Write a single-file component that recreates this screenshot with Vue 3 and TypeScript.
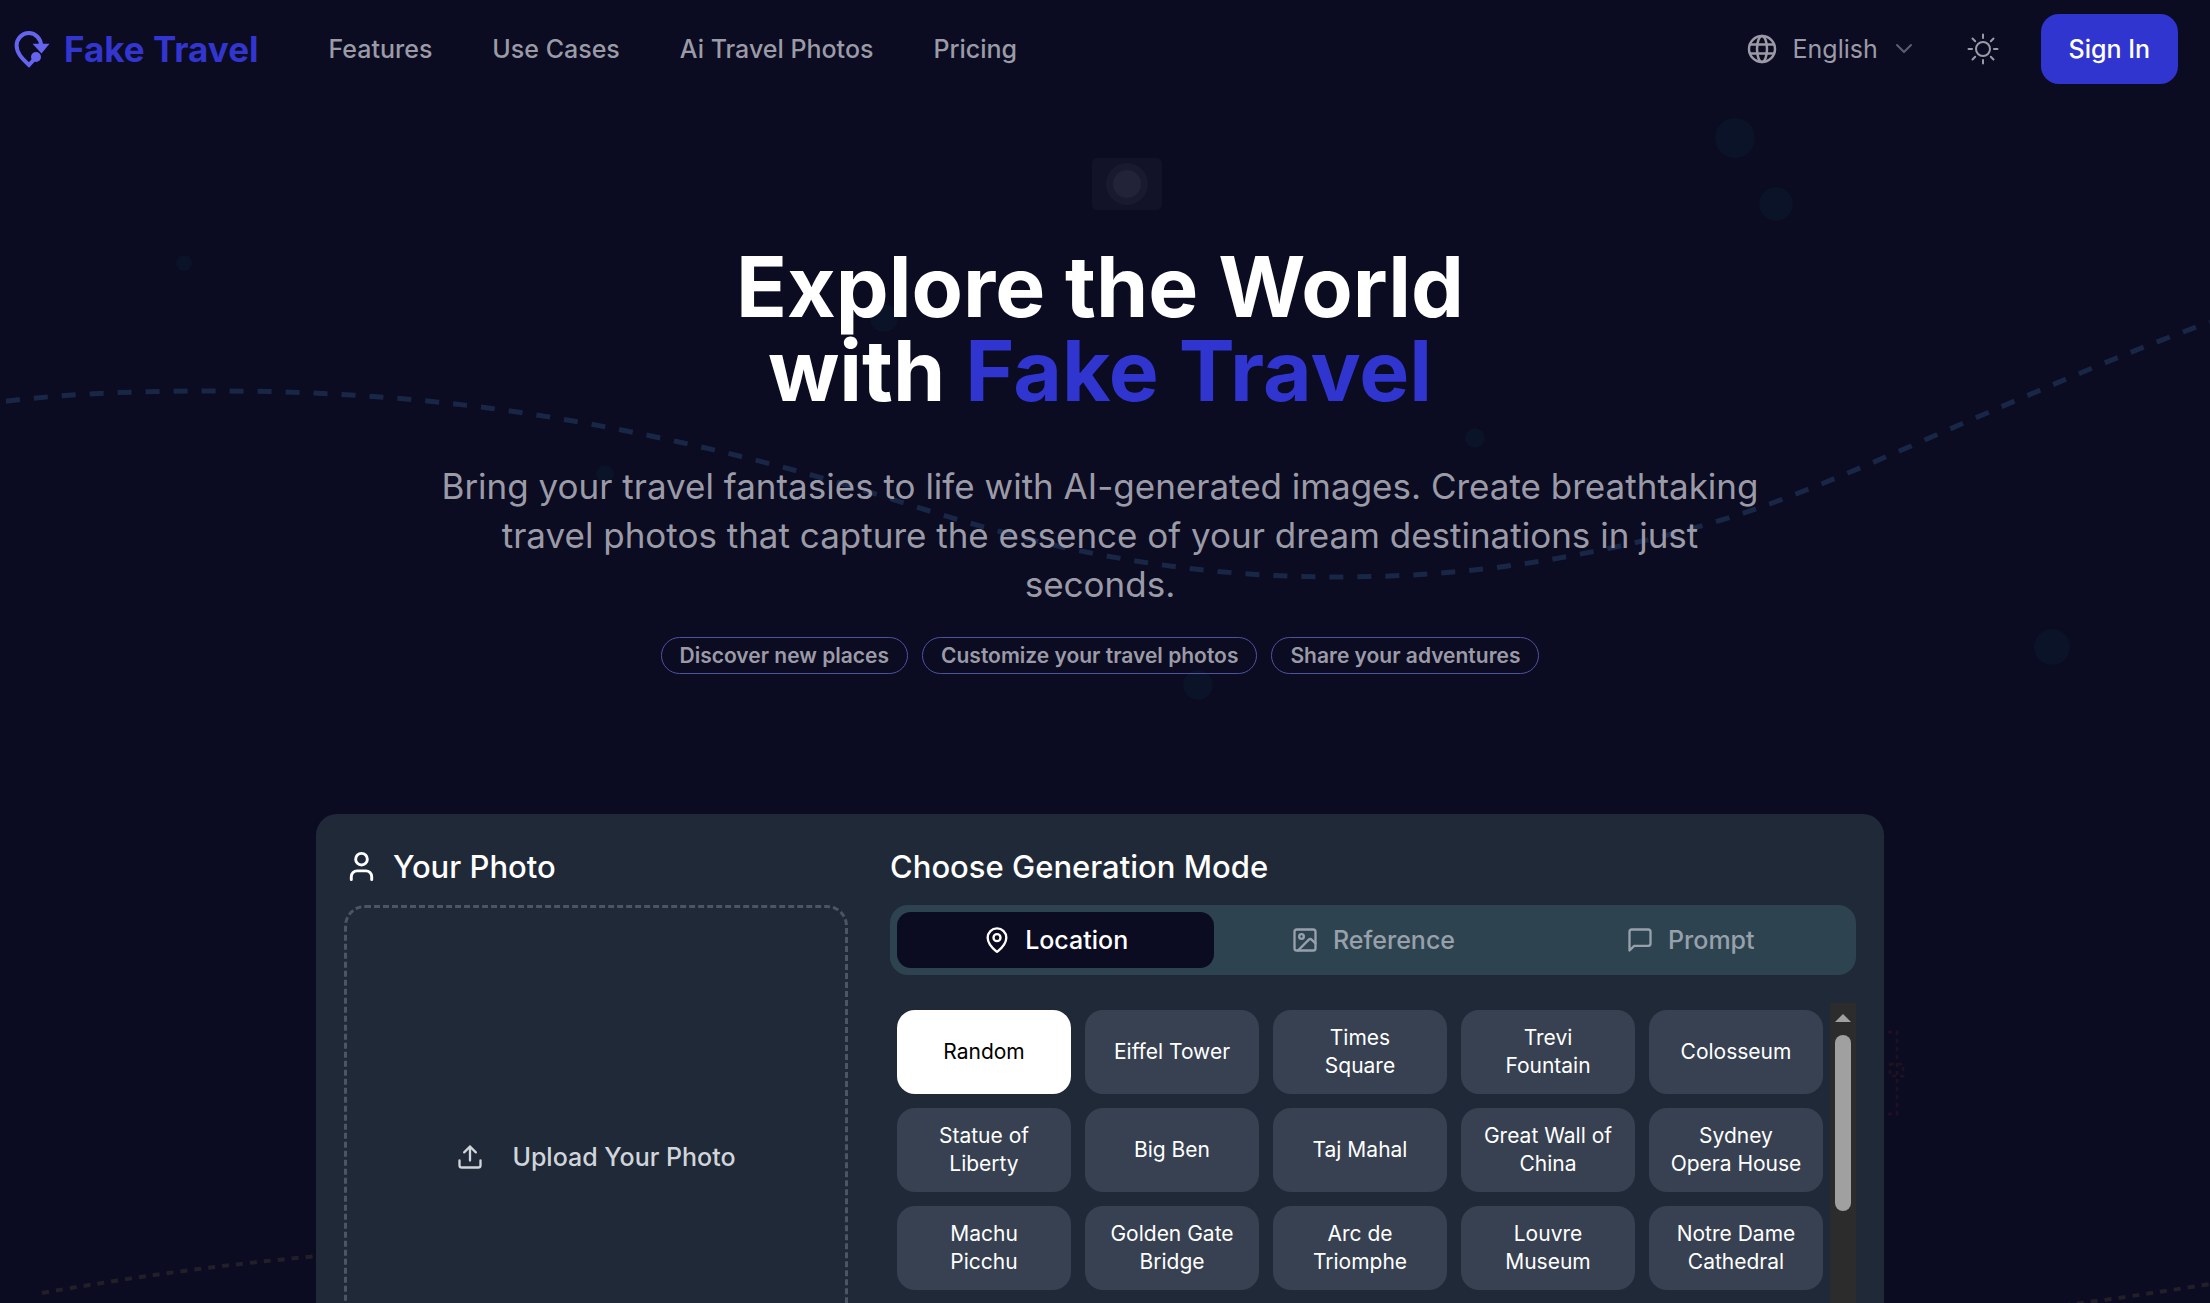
<script setup lang="ts">
import { ref } from 'vue'

interface Knot {
  x: number
  y: number
  slope: number
}

type Mode = 'location' | 'reference' | 'prompt'

const navLinks = ['Features', 'Use Cases', 'Ai Travel Photos', 'Pricing']
const highlights = ['Discover new places', 'Customize your travel photos', 'Share your adventures']
const modes: { id: Mode; label: string }[] = [
  { id: 'location', label: 'Location' },
  { id: 'reference', label: 'Reference' },
  { id: 'prompt', label: 'Prompt' },
]
const places = [
  'Random', 'Eiffel Tower', 'Times Square', 'Trevi Fountain', 'Colosseum',
  'Statue of Liberty', 'Big Ben', 'Taj Mahal', 'Great Wall of China', 'Sydney Opera House',
  'Machu Picchu', 'Golden Gate Bridge', 'Arc de Triomphe', 'Louvre Museum', 'Notre Dame Cathedral',
]

const language = ref('English')
const mode = ref<Mode>('location')
const place = ref('Random')

// Flight route behind the hero: knots joined by smooth cubic segments
const route: Knot[] = [
  { x: 0, y: 402, slope: -0.13 },
  { x: 220, y: 391, slope: 0 },
  { x: 488, y: 408, slope: 0.13 },
  { x: 679, y: 442, slope: 0.22 },
  { x: 885, y: 497, slope: 0.32 },
  { x: 1086, y: 552, slope: 0.2 },
  { x: 1336, y: 577, slope: 0 },
  { x: 1559, y: 558, slope: -0.18 },
  { x: 1775, y: 502, slope: -0.37 },
  { x: 1973, y: 419, slope: -0.43 },
  { x: 2210, y: 322, slope: -0.36 },
]

function smoothPath(knots: Knot[]): string {
  let d = `M${knots[0].x} ${knots[0].y}`
  for (let i = 1; i < knots.length; i++) {
    const a = knots[i - 1]
    const b = knots[i]
    const t = (b.x - a.x) / 3
    d += ` C${a.x + t} ${a.y + a.slope * t} ${b.x - t} ${b.y - b.slope * t} ${b.x} ${b.y}`
  }
  return d
}

const routePath = smoothPath(route)

const bubbles = [
  { x: 1735, y: 138, r: 20 },
  { x: 1776, y: 204, r: 17 },
  { x: 184, y: 263, r: 8 },
  { x: 884, y: 318, r: 14 },
  { x: 605, y: 474, r: 9 },
  { x: 1475, y: 438, r: 10 },
  { x: 1198, y: 685, r: 15 },
  { x: 2052, y: 647, r: 18 },
]
</script>

<template>
  <div class="page">
    <svg class="backdrop" viewBox="0 0 2210 1303" preserveAspectRatio="xMidYMin slice" aria-hidden="true">
      <circle v-for="b in bubbles" :key="b.x" :cx="b.x" :cy="b.y" :r="b.r" fill="#0a1327" />
      <path :d="routePath" fill="none" stroke="#192746" stroke-width="5" stroke-dasharray="14 14" stroke-dashoffset="-6" />
      <path d="M42 1293C400 1230 700 1230 1105 1290S1800 1350 2210 1284" fill="none" stroke="#231f28" stroke-width="4" stroke-dasharray="7 7" />
      <g fill="none" stroke="#1f1022" stroke-width="3" stroke-dasharray="4 4">
        <path d="M1880 1032H1897V1114H1880" />
        <rect x="1890" y="1064" width="13" height="12" />
      </g>
      <rect x="1092" y="158" width="70" height="52" rx="5" fill="#121228" />
      <circle cx="1127" cy="184" r="21" fill="#19192f" />
      <circle cx="1127" cy="184" r="14" fill="#222238" />
    </svg>

    <header class="topbar">
      <a class="brand" href="#">
        <svg width="36" height="38" viewBox="0 0 36 38" aria-hidden="true">
          <path d="M27 15.500A12.200 12.400 0 0 0 2.600 15.500C2.600 23 8 28.500 15 35L20.500 29" fill="none" stroke="#6464ee" stroke-width="4" />
          <path d="M18.500 13.800H35.500L27.500 23.500Z" fill="#6464ee" />
          <circle cx="22" cy="27" r="5" fill="#6464ee" />
        </svg>
        <span>Fake Travel</span>
      </a>
      <nav class="links">
        <a v-for="link in navLinks" :key="link" href="#">{{ link }}</a>
      </nav>
      <div class="tools">
        <div class="language">
          <svg width="30" height="30" viewBox="0 0 30 30" fill="none" stroke="currentColor" stroke-width="2.500" aria-hidden="true">
            <circle cx="15" cy="15" r="13" />
            <ellipse cx="15" cy="15" rx="5" ry="13" />
            <path d="M3 10.500H27M3 19.500H27" />
          </svg>
          <select v-model="language" aria-label="Language">
            <option>English</option>
          </select>
          <svg width="18" height="12" viewBox="0 0 18 12" fill="none" stroke="#5d5d6c" stroke-width="2" stroke-linecap="round" stroke-linejoin="round" aria-hidden="true">
            <path d="M2 2L9 9L16 2" />
          </svg>
        </div>
        <button class="theme" type="button" aria-label="Toggle theme">
          <svg width="32" height="32" viewBox="0 0 32 32" fill="none" stroke="currentColor" stroke-width="2" stroke-linecap="round" aria-hidden="true">
            <circle cx="16" cy="16" r="7" />
            <path d="M16 1.500V5M16 27V30.500M1.500 16H5M27 16H30.500M5.500 5.500L8.200 8.200M23.800 23.800L26.500 26.500M5.500 26.500L8.200 23.800M23.800 8.200L26.500 5.500" />
          </svg>
        </button>
        <button class="signin" type="button">Sign In</button>
      </div>
    </header>

    <main>
      <section class="hero">
        <h1>Explore the World<br />with <span>Fake Travel</span></h1>
        <p>
          Bring your travel fantasies to life with AI-generated images. Create breathtaking travel
          photos that capture the essence of your dream destinations in just seconds.
        </p>
        <ul class="badges">
          <li v-for="item in highlights" :key="item">{{ item }}</li>
        </ul>
      </section>

      <section class="card">
        <div class="photo">
          <h2>
            <svg width="35" height="35" viewBox="0 0 24 24" class="stroke" aria-hidden="true">
              <path d="M19 21v-2a4 4 0 0 0-4-4H9a4 4 0 0 0-4 4v2" />
              <circle cx="12" cy="7" r="4" />
            </svg>
            Your Photo
          </h2>
          <button class="upload" type="button">
            <svg width="28" height="28" viewBox="0 0 24 24" class="stroke" aria-hidden="true">
              <path d="M21 15v4a2 2 0 0 1-2 2H5a2 2 0 0 1-2-2v-4" />
              <path d="M17 8l-5-5-5 5M12 3v12" />
            </svg>
            Upload Your Photo
          </button>
        </div>

        <div class="generator">
          <h2>Choose Generation Mode</h2>
          <div class="tabs" role="tablist">
            <button
              v-for="m in modes"
              :key="m.id"
              type="button"
              role="tab"
              :aria-selected="mode === m.id"
              :class="{ active: mode === m.id }"
              @click="mode = m.id"
            >
              <svg width="28" height="28" viewBox="0 0 24 24" class="stroke" aria-hidden="true">
                <template v-if="m.id === 'location'">
                  <path d="M20 10c0 4.993-5.539 10.193-7.399 11.799a1 1 0 0 1-1.202 0C9.539 20.193 4 14.993 4 10a8 8 0 0 1 16 0" />
                  <circle cx="12" cy="10" r="3" />
                </template>
                <template v-else-if="m.id === 'reference'">
                  <rect x="3" y="3" width="18" height="18" rx="2" />
                  <circle cx="9" cy="9" r="2" />
                  <path d="M21 15l-3.086-3.086a2 2 0 0 0-2.828 0L6 21" />
                </template>
                <path v-else d="M21 15a2 2 0 0 1-2 2H7l-4 4V5a2 2 0 0 1 2-2h14a2 2 0 0 1 2 2z" />
              </svg>
              {{ m.label }}
            </button>
          </div>
          <div class="picker">
            <div class="places">
              <button
                v-for="p in places"
                :key="p"
                type="button"
                :class="{ chosen: place === p }"
                @click="place = p"
              >
                {{ p }}
              </button>
            </div>
            <div class="track" aria-hidden="true">
              <div class="arrow"></div>
              <div class="thumb"></div>
            </div>
          </div>
        </div>
      </section>
    </main>
  </div>
</template>

<style>
body {
  margin: 0;
  background: #0b0b22;
}
</style>

<style scoped>
.page {
  position: relative;
  height: 100vh;
  overflow: hidden;
  background: #0b0b22;
  color: #fff;
  font-family: Inter, "Liberation Sans", sans-serif;
}

.page * {
  box-sizing: border-box;
}

button,
select {
  border: 0;
  padding: 0;
  background: none;
  color: inherit;
  font: inherit;
}

a {
  color: inherit;
  text-decoration: none;
}

.stroke {
  flex: none;
  fill: none;
  stroke: currentColor;
  stroke-width: 2;
  stroke-linecap: round;
  stroke-linejoin: round;
}

.backdrop {
  position: absolute;
  inset: 0;
  width: 100%;
  height: 100%;
}

.topbar {
  position: relative;
  display: flex;
  align-items: center;
  height: 98px;
  padding: 0 32px 0 14px;
  color: #9b9ba7;
  font-size: 25px;
  font-weight: 500;
}

.brand {
  display: flex;
  align-items: center;
  gap: 14px;
  margin-right: 70px;
  color: #3335cf;
  font-size: 35px;
  font-weight: 700;
}

.links {
  display: flex;
  gap: 60px;
}

.tools {
  display: flex;
  align-items: center;
  gap: 42px;
  margin-left: auto;
}

.language {
  display: flex;
  align-items: center;
  gap: 16px;
  margin-right: 12px;
  font-weight: 400;
}

.language select {
  appearance: none;
}

.theme {
  display: flex;
}

.signin {
  height: 70px;
  padding: 0 28px;
  border-radius: 18px;
  background: #3135d0;
  color: #fff;
}

main {
  position: relative;
  padding-right: 10px;
}

.hero {
  display: flex;
  flex-direction: column;
  align-items: center;
  padding-top: 147px;
  text-align: center;
}

h1 {
  margin: 0 0 49px;
  font-size: 84px;
  font-weight: 700;
  line-height: 84px;
}

h1 span {
  color: #3135cf;
}

.hero p {
  max-width: 1344px;
  margin: 0 0 28px;
  color: #9b9ba7;
  font-size: 35px;
  line-height: 49px;
}

.badges {
  display: flex;
  gap: 14px;
  margin: 0 0 140px;
  padding: 0;
  list-style: none;
}

.badges li {
  padding: 0 18px;
  border: 1px solid #5052a0;
  border-radius: 19px;
  color: #9b9ba7;
  font-size: 21px;
  font-weight: 600;
  line-height: 35px;
}

.card {
  display: grid;
  grid-template-columns: 1fr 2fr;
  max-width: 1568px;
  margin: 0 auto;
  padding: 28px;
  border-radius: 21px;
  background: #1f2937;
}

h2 {
  display: flex;
  align-items: center;
  gap: 14px;
  height: 49px;
  margin: 0 0 14px;
  font-size: 31px;
  font-weight: 500;
}

.upload {
  display: flex;
  align-items: center;
  justify-content: center;
  gap: 28px;
  width: 100%;
  aspect-ratio: 1;
  border: 3px dashed #4b5563;
  border-radius: 21px;
  color: #d1d5db;
  font-size: 25px;
  font-weight: 500;
}

.generator {
  padding-left: 42px;
}

.tabs {
  display: grid;
  grid-template-columns: repeat(3, 1fr);
  margin-bottom: 28px;
  padding: 7px;
  border-radius: 18px;
  background: #2d4450;
}

.tabs button {
  display: flex;
  align-items: center;
  justify-content: center;
  gap: 14px;
  height: 56px;
  border-radius: 14px;
  color: #98a0ab;
  font-size: 25px;
  font-weight: 500;
}

.tabs .active {
  background: #0b0b22;
  color: #fff;
}

.picker {
  display: flex;
  height: 420px;
  overflow: hidden;
}

.places {
  display: grid;
  flex: 1;
  grid-template-columns: repeat(5, 1fr);
  grid-auto-rows: 84px;
  gap: 14px;
  padding: 7px;
}

.places button {
  padding: 0 20px;
  border-radius: 18px;
  background: #374151;
  font-size: 21px;
  line-height: 28px;
}

.places .chosen {
  background: #fff;
  color: #000;
}

.track {
  display: flex;
  flex-direction: column;
  align-items: center;
  gap: 13px;
  width: 26px;
  padding-top: 11px;
  background: #2c2c2c;
}

.arrow {
  border: 8px solid transparent;
  border-top-width: 0;
  border-bottom-color: #a0a0a0;
}

.thumb {
  width: 16px;
  height: 176px;
  border-radius: 8px;
  background: #a0a0a0;
}
</style>
